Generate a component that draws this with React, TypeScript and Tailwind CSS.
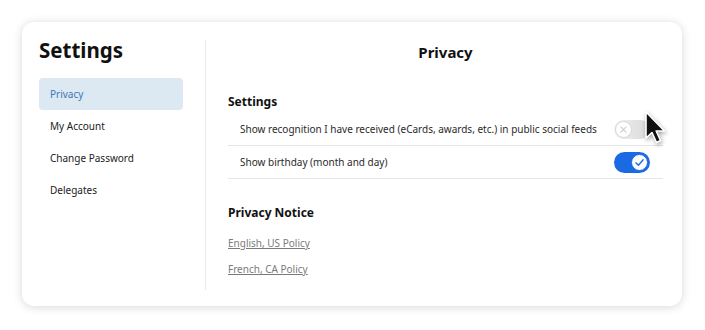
import { useState } from "react";

type Item = { label: string };

const navItems: Item[] = [{ label: "Privacy" }, { label: "My Account" }, { label: "Change Password" }, { label: "Delegates" }];

function Toggle({ on }: { on: boolean }) {
  if (on) {
    return (
      <div className="flex h-[21px] w-[36px] items-center justify-end rounded-full bg-[#1b6ae4] pr-[2px]">
        <div className="flex h-[17px] w-[17px] items-center justify-center rounded-full border border-[#1b6ae4] bg-white">
          <svg width="11" height="11" viewBox="0 0 12 12" fill="none">
            <path d="M2 6.4 4.8 9 10 3" stroke="#1b6ae4" strokeWidth="1.5" strokeLinecap="round" strokeLinejoin="round" />
          </svg>
        </div>
      </div>
    );
  }
  return (
    <div className="flex h-[19px] w-[36px] items-center rounded-full bg-gradient-to-r from-[#f1f1f1] to-[#d9d9d9] pl-[1px]">
      <div className="flex h-[17px] w-[17px] items-center justify-center rounded-full border border-[#d6d6d6] bg-white">
        <svg width="9" height="9" viewBox="0 0 10 10" fill="none">
          <path d="M2 2 8 8M8 2 2 8" stroke="#cfcfcf" strokeWidth="1.3" strokeLinecap="round" />
        </svg>
      </div>
    </div>
  );
}

function Cursor() {
  return (
    <svg className="absolute left-[641px] top-[108px] drop-shadow-[1px_2px_2px_rgba(0,0,0,0.35)]" width="30" height="40" viewBox="0 0 30 40">
      <path d="M5 4 L5 30 L11 24.5 L15.5 34.5 L19.5 32.5 L15.2 23 L23.5 23 Z" fill="#111" stroke="#fff" strokeWidth="1.6" strokeLinejoin="round" />
    </svg>
  );
}

export default function App() {
  const [active] = useState("Privacy");
  const [recognition] = useState(false);
  const [birthday] = useState(true);

  return (
    <div className="relative h-[330px] w-[705px] bg-white pl-[22px] pt-[22px] font-['Noto_Sans',sans-serif] text-[#1a1a1a]">
      <div className="flex h-[284px] w-[660px] rounded-[12px] bg-white pb-[16px] pl-[17px] pr-[19px] pt-[18px] shadow-[0_1px_10px_rgba(0,0,0,0.16)]">
        <aside className="w-[144px] shrink-0">
          <h1 className="text-[20.5px] font-bold leading-[20px] text-[#111]">Settings</h1>
          <nav className="mt-[18px] flex flex-col">
            {navItems.map((item) => (
              <div
                key={item.label}
                className={
                  item.label === active
                    ? "flex h-[32px] items-center rounded-[4px] bg-[#dce8f2] px-[11px] text-[10px] text-[#3f77b3]"
                    : "flex h-[32px] items-center px-[11px] text-[10px] text-[#222]"
                }
              >
                {item.label}
              </div>
            ))}
          </nav>
        </aside>

        <main className="ml-[22px] flex-1 border-l border-[#ececec] pl-[22px]">
          <h2 className="mt-[2px] text-center text-[15px] font-bold leading-[20px] text-[#111]">Privacy</h2>

          <h3 className="mt-[31px] text-[12px] font-bold leading-[18px] text-[#111]">Settings</h3>
          <div className="mt-[2px]">
            <div className="flex h-[33px] items-center justify-between border-b border-[#e6e6e6] pl-[12px] pr-[13px]">
              <span className="whitespace-nowrap text-[10px] text-[#2a2a2a]">
                Show recognition I have received (eCards, awards, etc.) in public social feeds
              </span>
              <Toggle on={recognition} />
            </div>
            <div className="flex h-[33px] items-center justify-between border-b border-[#e6e6e6] pl-[12px] pr-[13px]">
              <span className="whitespace-nowrap text-[10px] text-[#2a2a2a]">Show birthday (month and day)</span>
              <Toggle on={birthday} />
            </div>
          </div>

          <h3 className="mt-[25px] text-[12px] font-bold leading-[18px] text-[#111]">Privacy Notice</h3>
          <div className="mt-[13px] flex flex-col gap-[10px]">
            <a className="w-fit text-[10px] leading-[16px] text-[#7a7a7a] underline">English, US Policy</a>
            <a className="w-fit text-[10px] leading-[16px] text-[#7a7a7a] underline">French, CA Policy</a>
          </div>
        </main>
      </div>
      <Cursor />
    </div>
  );
}
